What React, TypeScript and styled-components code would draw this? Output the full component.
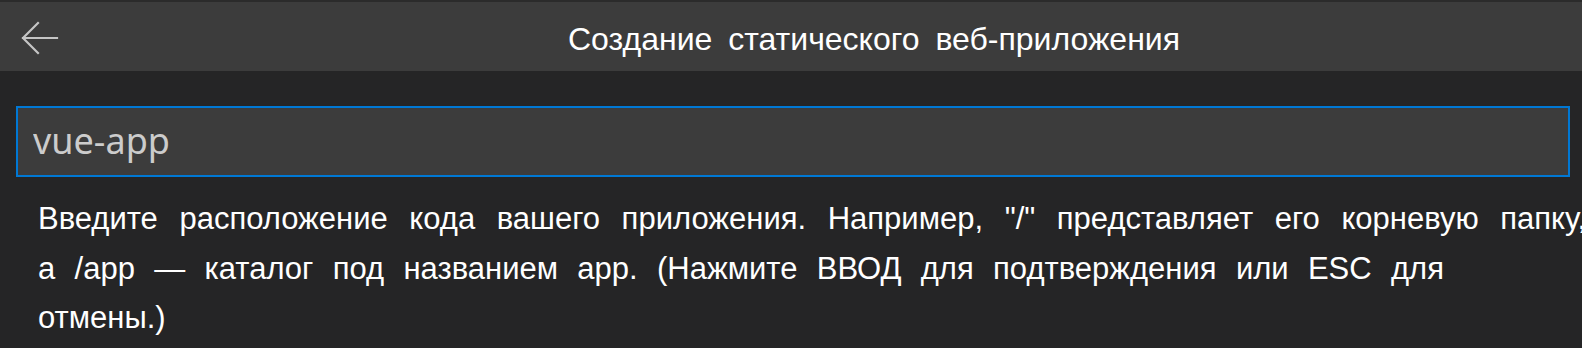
import React from "react";
import styled, { createGlobalStyle } from "styled-components";

const GlobalStyle = createGlobalStyle`
  html, body {
    margin: 0;
    padding: 0;
    background: #252526;
    overflow: hidden;
  }
  #root {
    width: 1582px;
    height: 348px;
    overflow: hidden;
  }
`;

const Page = styled.div`
  width: 1582px;
  height: 348px;
  background: #252526;
  display: flex;
  flex-direction: column;
  overflow: hidden;
`;

const Header = styled.header`
  display: grid;
  grid-template-columns: 166px 1fr;
  height: 69px;
  background: #3c3c3c;
  border-top: 2px solid #2b2b2b;
`;

const BackButton = styled.button`
  display: flex;
  align-items: center;
  justify-content: flex-start;
  padding: 3px 0 0 21px;
  margin: 0;
  border: none;
  background: transparent;
  color: #c5c5c5;
  cursor: pointer;
`;

const Title = styled.h1`
  margin: 0;
  padding-top: 5px;
  line-height: 64px;
  text-align: center;
  font-family: "Liberation Sans", Arial, sans-serif;
  font-weight: 400;
  font-size: 32px;
  word-spacing: 7px;
  color: #ffffff;
  white-space: nowrap;
`;

const Content = styled.main`
  display: flex;
  flex-direction: column;
  padding: 35px 12px 0 16px;
`;

const Input = styled.input`
  box-sizing: border-box;
  width: 1554px;
  height: 71px;
  margin: 0;
  padding: 0 0 2px 15px;
  border: 2px solid #0078d4;
  background: #3c3c3c;
  color: #cccccc;
  font-family: "Noto Sans", "Open Sans", sans-serif;
  font-size: 36px;
  outline: none;
`;

const Description = styled.div`
  display: flex;
  flex-direction: column;
  padding: 17px 0 0 22px;
  font-family: "Liberation Sans", Arial, sans-serif;
  font-size: 31px;
  line-height: 49.5px;
  color: #ffffff;
`;

const Line = styled.div<{ $justify?: boolean; $spacing: number }>`
  white-space: ${(p) => (p.$justify ? "normal" : "nowrap")};
  width: ${(p) => (p.$justify ? "1548px" : "auto")};
  text-align: ${(p) => (p.$justify ? "justify" : "left")};
  text-align-last: ${(p) => (p.$justify ? "justify" : "auto")};
  word-spacing: ${(p) => p.$spacing}px;
`;

const ArrowLeft = () => (
  <svg width="38" height="34" viewBox="0 0 38 34" fill="none">
    <path
      d="M17 2 L2 17 L17 32 M2 17 H36"
      stroke="#c5c5c5"
      strokeWidth="2.2"
      strokeLinecap="square"
      strokeLinejoin="miter"
    />
  </svg>
);

export default function App() {
  return (
    <>
      <GlobalStyle />
      <Page>
        <Header>
          <BackButton aria-label="Назад">
            <ArrowLeft />
          </BackButton>
          <Title>Создание статического веб-приложения</Title>
        </Header>
        <Content>
          <Input defaultValue="vue-app" readOnly />
          <Description>
            <Line $justify $spacing={3}>
              Введите расположение кода вашего приложения. Например, "/" представляет его корневую папку,
            </Line>
            <Line $spacing={10.7}>
              а /app — каталог под названием app. (Нажмите ВВОД для подтверждения или ESC для
            </Line>
            <Line $spacing={6}>отмены.)</Line>
          </Description>
        </Content>
      </Page>
    </>
  );
}
